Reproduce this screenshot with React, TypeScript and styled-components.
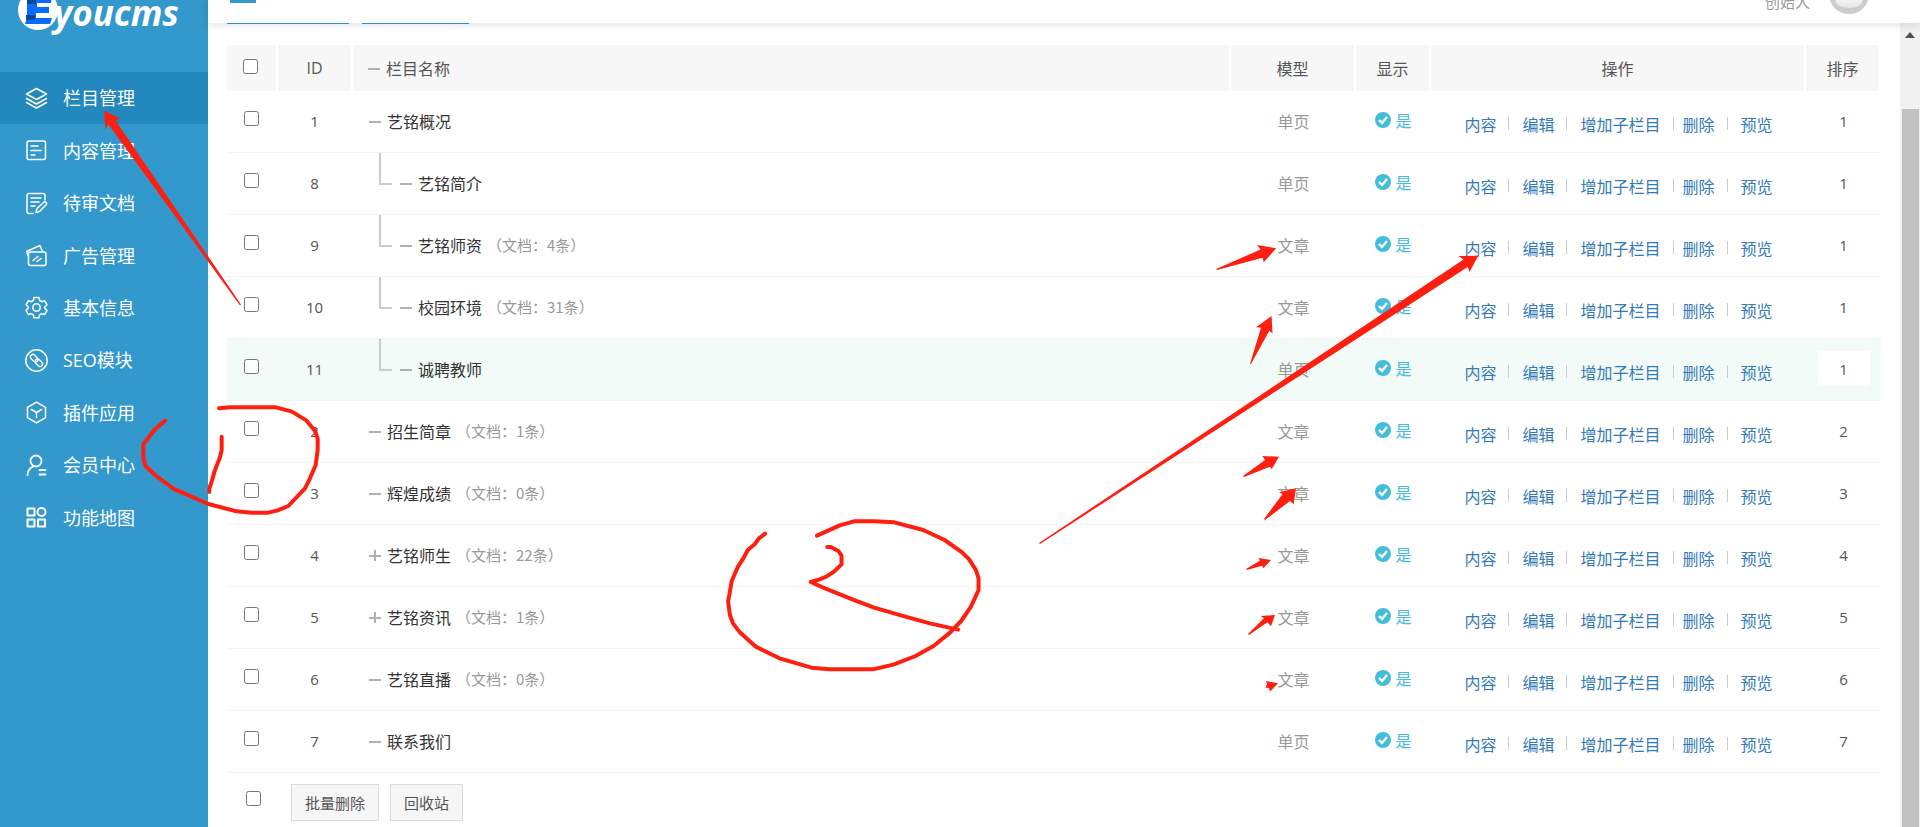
import React from "react";
import styled, { createGlobalStyle } from "styled-components";

const GlobalStyle = createGlobalStyle`
  * { box-sizing: border-box; }
  body {
    margin: 0;
    background: #fff;
    color: #555;
    font-family: "Open Sans", "Noto Sans CJK SC", sans-serif;
    font-size: 16px;
  }
  a { text-decoration: none; }
`;

const Page = styled.div`
  position: relative;
  display: flex;
  min-height: 100vh;
  overflow: hidden;
`;

/* ---------- sidebar ---------- */

const Sidebar = styled.aside`
  flex: 0 0 208px;
  background: #3398cc;
`;

const Brand = styled.a`
  display: block;
  height: 72px;
  svg { display: block; }
`;

const Menu = styled.nav`
  display: flex;
  flex-direction: column;
  height: 472px;
`;

const MenuLink = styled.a<{ $active?: boolean }>`
  flex: 1;
  display: flex;
  align-items: center;
  gap: 15px;
  padding-left: 25px;
  color: #fff;
  font-size: 18px;
  line-height: 24px;
  background: ${(p) => (p.$active ? "#2288bd" : "transparent")};
`;

const MenuIcon = styled.svg`
  width: 23px;
  height: 23px;
  fill: none;
  stroke: #fff;
  stroke-width: 1.5;
  stroke-linecap: round;
  stroke-linejoin: round;
`;

/* ---------- right side ---------- */

const Body = styled.div`
  flex: 1;
  min-width: 0;
  display: flex;
  flex-direction: column;
`;

const TopBar = styled.header`
  position: relative;
  display: flex;
  justify-content: space-between;
  height: 23px;
  padding: 0 51px 0 22px;
  background: #fff;
  box-shadow: 0 2px 8px rgba(0, 0, 0, 0.12);
`;

const TopTab = styled.div`
  width: 26px;
  height: 3px;
  background: #3398cc;
`;

const User = styled.div`
  display: flex;
  align-items: flex-start;
  gap: 19px;
  height: 14px;
  overflow: hidden;
  color: #999;
  font-size: 15px;
`;

const UserName = styled.span`
  margin-top: -9px;
  line-height: 22px;
`;

const Scroller = styled.div`
  flex: 1;
  display: flex;
`;

const Main = styled.main`
  flex: 1;
  min-width: 0;
  padding: 0 19px;
`;

const TabRow = styled.div`
  display: flex;
  gap: 13px;
  margin-bottom: 21px;
`;

const TabEdge = styled.div<{ $width: number }>`
  position: relative;
  width: ${(p) => p.$width}px;
  height: 1px;
  background: #2d8fc4;
`;

const Track = styled.div`
  display: flex;
  flex-direction: column;
  align-items: center;
  width: 20px;
  padding-top: 9px;
  background: #f1f1f1;
`;

const Thumb = styled.div`
  flex: 1;
  width: 17px;
  margin-top: 71px;
  background: #c1c1c1;
`;

/* ---------- table ---------- */

const Table = styled.table`
  width: 100%;
  table-layout: fixed;
  border-collapse: separate;
  border-spacing: 0;
`;

const Col = styled.col<{ $width?: number }>`
  width: ${(p) => (p.$width ? `${p.$width}px` : "auto")};
`;

const Head = styled.th`
  height: 46px;
  padding: 0;
  border-right: 2px solid #fff;
  background: #f7f7f7;
  font-weight: 400;
  text-align: center;
`;

const Row = styled.tr<{ $hover?: boolean }>`
  background: ${(p) => (p.$hover ? "#f2fbf8" : "transparent")};
`;

const Cell = styled.td`
  padding: 0 0 2px;
  border-bottom: 1px solid #f4f4f4;
  text-align: center;
`;

const CheckWrap = styled.label`
  display: flex;
  justify-content: center;
  padding: 0 2px 4px 0;
`;

const Check = styled.input.attrs({ type: "checkbox" })`
  width: 15px;
  height: 15px;
  margin: 0;
`;

const IdCell = styled(Cell)`
  padding-right: 2px;
  font-size: 15px;
`;

const Name = styled.div<{ $height: number; $indent: number }>`
  display: flex;
  align-items: center;
  height: ${(p) => p.$height}px;
  padding-left: ${(p) => p.$indent}px;
  text-align: left;
`;

const Tree = styled.span`
  align-self: flex-start;
  width: 13px;
  height: 32px;
  margin-right: 8px;
  border-left: 2px solid #ccc;
  border-bottom: 2px solid #ccc;
`;

const Toggle = styled.svg`
  width: 12px;
  height: 12px;
  margin-right: 6px;
  stroke: #adb2b6;
  stroke-width: 2;
`;

const Title = styled.a`
  color: #333;
`;

const Count = styled.span`
  margin-left: 5px;
  color: #999;
  font: 15px "Noto Sans CJK SC", sans-serif;
`;

const ModelCell = styled(Cell)`
  color: #999;
`;

const Shown = styled.span`
  display: inline-flex;
  align-items: center;
  gap: 4px;
  color: #42bddb;
`;

const Actions = styled.div`
  display: flex;
  align-items: center;
  justify-content: center;
  padding-top: 6px;
`;

const Action = styled.a<{ $tight?: boolean }>`
  margin-left: ${(p) => (p.$tight ? 9 : 13)}px;
  color: #337ab7;
  &:first-child { margin-left: 0; }
`;

const Sep = styled.span`
  width: 1px;
  height: 13px;
  margin-left: 12px;
  background: #ccc;
`;

const Sort = styled.input<{ $hover?: boolean }>`
  display: block;
  width: 52px;
  height: 35px;
  margin: 0 auto;
  padding: 0;
  border: 0;
  background: ${(p) => (p.$hover ? "#fff" : "transparent")};
  color: #555;
  font: 15px "Open Sans", sans-serif;
  text-align: center;
`;

const Footer = styled.div`
  display: flex;
  align-items: center;
  padding: 11px 0 6px 19px;
`;

const FooterCheck = styled.label`
  display: flex;
  margin-right: 30px;
  padding-bottom: 8px;
`;

const Button = styled.button`
  height: 37px;
  margin-right: 11px;
  padding: 0 13px;
  border: 1px solid #dcdcdc;
  background: #f6f6f6;
  color: #555;
  font: 15px "Open Sans", "Noto Sans CJK SC", sans-serif;
`;

const Marks = styled.svg`
  position: absolute;
  top: 0;
  left: 0;
  pointer-events: none;
`;

/* ---------- data ---------- */

const menu: { label: string; icon: React.ReactNode }[] = [
  {
    label: "栏目管理",
    icon: (
      <>
        <path d="M11.5 1.5 21.5 7l-10 5.5L1.5 7z" />
        <path d="m1.5 11.5 10 5.5 10-5.5" />
        <path d="m1.5 15.500 10 5.500 10-5.500" />
      </>
    ),
  },
  {
    label: "内容管理",
    icon: (
      <>
        <rect x="2" y="2" width="18.500" height="18.500" rx="2" />
        <path d="M6 7h7M6 11.500h10M6 16h4" />
      </>
    ),
  },
  {
    label: "待审文档",
    icon: (
      <>
        <path d="M20 8V3.500A2 2 0 0 0 18 1.500H4a2 2 0 0 0-2 2v16a2 2 0 0 0 2 2h4" />
        <path d="M6 6h10M6 10h8M6 14h4" />
        <path d="m11 20.500 1-4 6.500-6a1.700 1.700 0 0 1 2.600 2.300l-6.600 6.700z" />
      </>
    ),
  },
  {
    label: "广告管理",
    icon: (
      <>
        <rect x="3.500" y="8" width="17.500" height="13.500" rx="2" />
        <path d="M3.500 13 1.500 7.500 15 1.500 17.500 7.500" />
        <path d="m8 16.500 5-4M12 17.500l4-3" />
      </>
    ),
  },
  {
    label: "基本信息",
    icon: (
      <>
        <circle cx="11.500" cy="11.500" r="3.700" />
        <path d="M9 1.500h5l.7 3 2 1.200 3-.9 2.300 4-2.200 2.200v1.400l2.200 2.100-2.300 4-3-.9-2 1.200-.7 3H9l-.7-3-2-1.200-3 .9-2.300-4 2.200-2.100V11L1 8.800l2.300-4 3 .9 2-1.200z" />
      </>
    ),
  },
  {
    label: "SEO模块",
    icon: (
      <>
        <circle cx="11.500" cy="11.500" r="10.700" />
        <g transform="rotate(45 11.500 11.500)" strokeWidth="1.300">
          <rect x="4" y="9" width="8.500" height="5" rx="2.500" />
          <rect x="10.500" y="9" width="8.500" height="5" rx="2.500" />
        </g>
      </>
    ),
  },
  {
    label: "插件应用",
    icon: (
      <>
        <path d="M11.500 1.200 20.500 6.300v10.400l-9 5.100-9-5.100V6.300z" />
        <path d="m6.500 8.500 5 3 5-3M11.500 11.500v5.500" />
      </>
    ),
  },
  {
    label: "会员中心",
    icon: (
      <g strokeWidth="1.800">
        <circle cx="11" cy="7" r="5.500" />
        <path d="M2.500 21c0-4 2-6.500 5.500-8.500M14.500 16h6M14.500 20.500h6" />
      </g>
    ),
  },
  {
    label: "功能地图",
    icon: (
      <g strokeWidth="2">
        <rect x="2.500" y="2.500" width="7" height="7" />
        <circle cx="16.500" cy="6" r="4" />
        <rect x="2.500" y="13.500" width="7" height="7" />
        <rect x="13" y="13.500" width="7" height="7" />
      </g>
    ),
  },
];

type Item = {
  id: number;
  name: string;
  model: string;
  sort: number;
  docs?: number;
  child?: boolean;
  closed?: boolean;
  hover?: boolean;
};

const items: Item[] = [
  { id: 1, name: "艺铭概况", model: "单页", sort: 1 },
  { id: 8, name: "艺铭简介", model: "单页", sort: 1, child: true },
  { id: 9, name: "艺铭师资", model: "文章", sort: 1, child: true, docs: 4 },
  { id: 10, name: "校园环境", model: "文章", sort: 1, child: true, docs: 31 },
  { id: 11, name: "诚聘教师", model: "单页", sort: 1, child: true, hover: true },
  { id: 2, name: "招生简章", model: "文章", sort: 2, docs: 1 },
  { id: 3, name: "辉煌成绩", model: "文章", sort: 3, docs: 0 },
  { id: 4, name: "艺铭师生", model: "文章", sort: 4, docs: 22, closed: true },
  { id: 5, name: "艺铭资讯", model: "文章", sort: 5, docs: 1, closed: true },
  { id: 6, name: "艺铭直播", model: "文章", sort: 6, docs: 0 },
  { id: 7, name: "联系我们", model: "单页", sort: 7 },
];

const actions = ["内容", "编辑", "增加子栏目", "删除", "预览"];

const arrows = [
  "104,110.5 120,118.5 115.5,120.5 241,304.5 240,305.5 108.5,124.5 105.5,129",
  "1478.2,255.7 1458.5,256 1463.5,259.5 1039,543 1040,544 1467.7,267 1469.5,272",
  "1276.2,248.3 1257,245 1260.6,249.5 1216,269 1217,270 1262.5,257.700 1263.800,262.300",
  "1271.6,316 1256,327.300 1261,327.700 1250,364 1251,364 1269.300,330.700 1272.500,333.300",
  "1279,456.700 1262.400,456 1265,460 1243,476 1244,477 1270,466.700 1271.600,469.300",
  "1296,488.300 1279,492.300 1282.600,494 1264,519 1265,520 1290,501 1293.700,504.300",
  "1271,560 1258.500,558 1259.800,560.700 1246,569 1247,570 1262,565.700 1263.400,568.300",
  "1275,615 1260.700,616 1263.800,618.300 1248,634 1249,635 1267.400,622.300 1271,626.300",
  "1278,683.300 1266,681 1267,684 1265.500,687.700 1269,688 1270,691.700",
];

const Toggler = ({ closed }: { closed?: boolean }) => (
  <Toggle viewBox="0 0 12 12">
    <path d={closed ? "M0 7h12M6 1v12" : "M0 7h12"} />
  </Toggle>
);

export default function App() {
  return (
    <>
      <GlobalStyle />
      <Page>
        <Sidebar>
          <Brand href="#" aria-label="Eyoucms">
            <svg width="208" height="40" viewBox="0 0 208 40">
              <circle cx="38" cy="10" r="20" fill="#fff" />
              <path d="M27-4h25l-1 7h-14v4h12v6H36v5h16l-2 6H25l2-7z" fill="#0a6cff" />
              <path d="M27 0h9v4h-9zM26 15h9v5h-9z" fill="#0b4597" />
              <text x="54" y="26" fill="#fff" fontFamily="Open Sans" fontWeight="700" fontStyle="italic" fontSize="35">
                youcms
              </text>
            </svg>
          </Brand>
          <Menu>
            {menu.map((m, i) => (
              <MenuLink key={m.label} href="#" $active={i === 0}>
                <MenuIcon viewBox="0 0 23 23">{m.icon}</MenuIcon>
                {m.label}
              </MenuLink>
            ))}
          </Menu>
        </Sidebar>

        <Body>
          <TopBar>
            <TopTab />
            <User>
              <UserName>创始人</UserName>
              <svg width="40" height="14" viewBox="0 0 40 14">
                <defs>
                  <linearGradient id="bust" x1="0" y1="0" x2="0" y2="1">
                    <stop offset="0" stopColor="#fff" />
                    <stop offset="1" stopColor="#e2e2e2" />
                  </linearGradient>
                </defs>
                <circle cx="20" cy="-6" r="20" fill="#ccc" />
                <path d="M6-1Q10-5 20-5T34-1Q33 8 20 8T6-1z" fill="url(#bust)" />
              </svg>
            </User>
          </TopBar>
          <Scroller>
            <Main>
              <TabRow>
                <TabEdge $width={122} />
                <TabEdge $width={107} />
              </TabRow>
              <Table>
                <colgroup>
                  <Col $width={51} />
                  <Col $width={75} />
                  <Col />
                  <Col $width={125} />
                  <Col $width={75} />
                  <Col $width={375} />
                  <Col $width={75} />
                </colgroup>
                <thead>
                  <tr>
                    <Head>
                      <CheckWrap>
                        <Check aria-label="全选" />
                      </CheckWrap>
                    </Head>
                    <Head>ID</Head>
                    <Head>
                      <Name $height={46} $indent={15}>
                        <Toggler />
                        栏目名称
                      </Name>
                    </Head>
                    <Head>模型</Head>
                    <Head>显示</Head>
                    <Head>操作</Head>
                    <Head>排序</Head>
                  </tr>
                </thead>
                <tbody>
                  {items.map((it) => (
                    <Row key={it.id} $hover={it.hover}>
                      <Cell>
                        <CheckWrap>
                          <Check aria-label={it.name} />
                        </CheckWrap>
                      </Cell>
                      <IdCell>{it.id}</IdCell>
                      <Cell>
                        <Name $height={59} $indent={it.child ? 26 : 16}>
                          {it.child && <Tree />}
                          <Toggler closed={it.closed} />
                          <Title href="#">{it.name}</Title>
                          {it.docs !== undefined && <Count>（文档：{it.docs}条）</Count>}
                        </Name>
                      </Cell>
                      <ModelCell>{it.model}</ModelCell>
                      <Cell>
                        <Shown>
                          <svg width="16" height="16" viewBox="0 0 16 16">
                            <circle cx="8" cy="8" r="8" fill="#42bddb" />
                            <path d="m4 8 3 3 5-6" fill="none" stroke="#fff" strokeWidth="2.400" />
                          </svg>
                          是
                        </Shown>
                      </Cell>
                      <Cell>
                        <Actions>
                          {actions.map((a, i) => (
                            <React.Fragment key={a}>
                              {i > 0 && <Sep />}
                              <Action href="#" $tight={i === 3}>
                                {a}
                              </Action>
                            </React.Fragment>
                          ))}
                        </Actions>
                      </Cell>
                      <Cell>
                        <Sort aria-label={`${it.name} 排序`} defaultValue={it.sort} $hover={it.hover} />
                      </Cell>
                    </Row>
                  ))}
                </tbody>
              </Table>
              <Footer>
                <FooterCheck>
                  <Check aria-label="全选" />
                </FooterCheck>
                <Button type="button">批量删除</Button>
                <Button type="button">回收站</Button>
              </Footer>
            </Main>
            <Track>
              <svg width="10" height="6" viewBox="0 0 10 6">
                <path d="M5 0 10 6H0z" fill="#505050" />
              </svg>
              <Thumb />
            </Track>
          </Scroller>
        </Body>

        <Marks width="1920" height="827" viewBox="0 0 1920 827" fill="none">
          {arrows.map((points) => (
            <polygon key={points} points={points} fill="#ff1f10" />
          ))}
          <g stroke="#ff1f10" strokeWidth="4" strokeLinecap="round" strokeLinejoin="round">
            <g transform="translate(0 270) scale(.33333)">
              <polyline
                vectorEffect="non-scaling-stroke"
                points="657,415 690,412 828,412 876,425 920,452 945,483 953,505 953,540 947,585 930,625 915,655 865,708 833,721 805,728 755,728 710,724 625,702 520,656 465,615 437,588 430,565 430,523 465,478 495,452"
              />
              <polyline
                vectorEffect="non-scaling-stroke"
                points="665,500 665,540 660,562 645,600 635,635 628,655 628,666"
              />
            </g>
            <g transform="translate(700 420) scale(.44643 .33333)">
              <polyline
                vectorEffect="non-scaling-stroke"
                points="146,341 132,355 123,372 107,390 97,415 85,440 71,483 67,515 63,545 67,585 74,610 88,635 125,680 178,715 250,743 290,748 387,748 433,734 483,708 523,678 560,638 585,603 607,560 624,510 624,475 618,450 603,418 587,397 548,360 500,330 435,307 390,304 345,304 313,316 262,347"
              />
              <polyline
                vectorEffect="non-scaling-stroke"
                points="285,381 293,381 310,393 317,407 317,433 300,455 283,470 268,478 248,486 280,505 347,541 390,563 460,590 515,610 578,629"
              />
            </g>
          </g>
        </Marks>
      </Page>
    </>
  );
}
